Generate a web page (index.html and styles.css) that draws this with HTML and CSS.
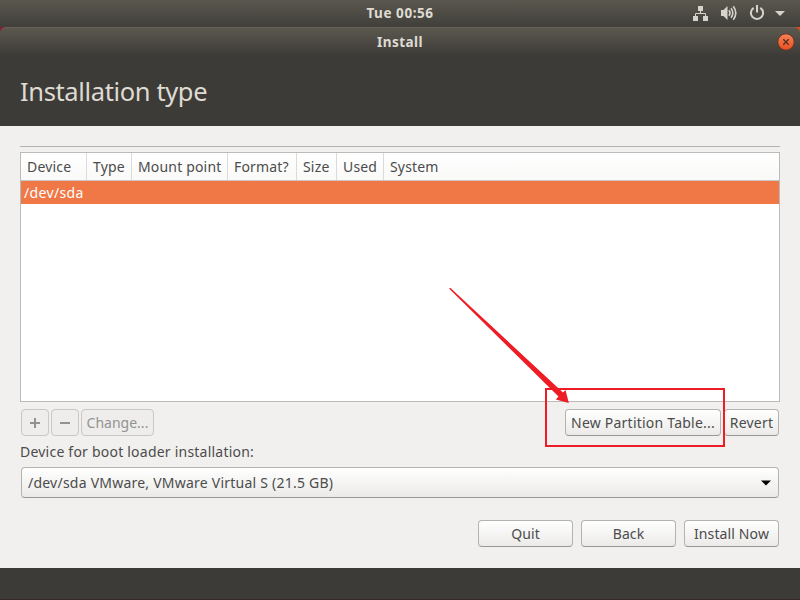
FILE: index.html
```html
<!DOCTYPE html>
<html lang="en">
<head>
<meta charset="utf-8">
<title>Install</title>
<link rel="stylesheet" href="styles.css">
</head>
<body>
<div class="topbar">
  <span class="clock">Tue 00:56</span>
  <svg class="tray" width="100" height="27" viewBox="0 0 100 27">
    <g fill="#d6d3cb">
      <path d="M8 6h5v5H8zM3 16h5v5H3zM13 16h5v5h-5z"/>
      <path d="M31 10h2.500l4-4v14l-4-4H31z"/>
      <path d="M85 11h10l-5 5z"/>
    </g>
    <g fill="none" stroke="#d6d3cb">
      <path d="M10.500 11v2.500M5.500 16v-2.500h10V16"/>
      <path d="M39 10.300q2 2.700 0 5.400M41 8.300q3.600 4.700 0 9.400M43.300 6.300q5 6.700 0 13.400" stroke-width="1.600"/>
      <path d="M63.700 7.800a6.100 6.100 0 1 0 6.600 0M67 5v7.500" stroke-width="2"/>
    </g>
  </svg>
</div>
<div class="window">
  <div class="titlebar">
    <span class="title">Install</span>
    <svg class="close" width="18" height="18" viewBox="0 0 18 18">
      <defs><linearGradient id="cg" x2="0" y2="1"><stop stop-color="#f78259"/><stop offset="1" stop-color="#e9501f"/></linearGradient></defs>
      <circle cx="9" cy="9" r="8.200" fill="url(#cg)" stroke="#6a3422" stroke-width="1"/>
      <path d="M6.300 6.300l5.400 5.400M11.700 6.300l-5.400 5.400" stroke="#51301f" stroke-width="1.300"/>
    </svg>
  </div>
  <header class="header"><h1><span>Installation type</span></h1></header>
  <main class="content">
    <div class="rule"></div>
    <div class="table">
      <div class="thead">
        <span class="c-device">Device</span><span class="c-type">Type</span><span class="c-mount">Mount point</span><span class="c-format">Format?</span><span class="c-size">Size</span><span class="c-used">Used</span><span class="c-system">System</span>
      </div>
      <div class="row"><span>/dev/sda</span></div>
    </div>
    <div class="tools">
      <div class="btn icon off"><svg width="12" height="12" viewBox="0 0 12 12"><path d="M1 6h10M6 1v10" stroke="#929390" stroke-width="2"/></svg></div>
      <div class="btn icon off"><svg width="12" height="12" viewBox="0 0 12 12"><path d="M1 6h10" stroke="#929390" stroke-width="2"/></svg></div>
      <div class="btn change off"><span>Change...</span></div>
      <div class="btn newtable"><span>New Partition Table...</span></div>
      <div class="btn revert"><span>Revert</span></div>
    </div>
    <div class="label"><span>Device for boot loader installation:</span></div>
    <div class="btn combo"><span>/dev/sda VMware, VMware Virtual S (21.5 GB)</span><svg width="10" height="6" viewBox="0 0 10 6"><path d="M0 .5h10L5 5.500z" fill="#000"/></svg></div>
    <div class="actions">
      <div class="btn"><span>Quit</span></div>
      <div class="btn"><span>Back</span></div>
      <div class="btn install"><span>Install Now</span></div>
    </div>
  </main>
</div>
<div class="bottom"></div>
<svg class="marks" width="800" height="600" viewBox="0 0 800 600">
  <rect x="546" y="389" width="178" height="57" fill="none" stroke="#ee1c25" stroke-width="2"/>
  <path d="M449 288.500l1.500-.5L563 392.500l2.500-2.500 3.300 13-13-3.500 2.700-3z" fill="#ee1c25"/>
</svg>
</body>
</html>
```
FILE: styles.css
```css
* { box-sizing: border-box; }
body {
  margin: 0;
  width: 800px;
  height: 600px;
  overflow: hidden;
  background: #3d3b37;
  color: #4c4c4c;
  font: 14px/20px "Noto Sans", "Open Sans", sans-serif;
  white-space: nowrap;
}
.topbar {
  height: 27px;
  display: grid;
  grid-template-columns: 1fr auto 1fr;
  align-items: center;
  background: linear-gradient(#5a574e, #403f3a);
  color: #dfdbd2;
  font-weight: 700;
  font-size: 13.5px;
}
.clock { grid-column: 2; position: relative; top: -1px; letter-spacing: 0.55px; }
.tray { justify-self: end; margin-right: 10px; }
.window {
  height: 541px;
  display: flex;
  flex-direction: column;
  background: linear-gradient(90deg, #8b1a35 50%, #dd4814 50%) top / 100% 5px no-repeat;
}
.titlebar {
  height: 29px;
  flex: none;
  display: grid;
  grid-template-columns: 1fr auto 1fr;
  align-items: center;
  border-top: 1px solid #656157;
  border-radius: 6px 6px 0 0;
  background: linear-gradient(#5b584f, #3d3b37);
  color: #dfdbd2;
  font-weight: 700;
  font-size: 13.5px;
}
.title { grid-column: 2; letter-spacing: 0.45px; }
.close { justify-self: end; margin-right: 5px; }
.header { height: 70px; flex: none; background: #3d3b37; }
h1 {
  margin: 0;
  padding: 17px 20px 0;
  font-size: 25.5px;
  line-height: 36px;
  font-weight: 400;
  letter-spacing: -0.37px;
  color: #dfdbd2;
}
.content { flex: 1; padding: 20px 20px 0; background: #f1f0ee; }
.rule { height: 1px; background: #b5b3ae; }
.table {
  height: 250px;
  margin-top: 5px;
  border: 1px solid #bcbbb7;
  background: #fff;
}
.thead {
  height: 28px;
  display: flex;
  border-bottom: 1px solid #c8c7c4;
  background: linear-gradient(#fff, #f9f9f8);
  letter-spacing: 0.17px;
}
.thead > span { padding: 4px 0 0 6px; border-right: 1px solid #dcdbd9; }
.c-device { width: 66px; }
.c-type { width: 45px; }
.c-mount { width: 96px; }
.c-format { width: 69px; }
.c-size { width: 40px; }
.c-used { width: 47px; }
.thead > .c-system { border: 0; }
.row { height: 23px; padding: 2px 3px; background: #f07746; color: #fff; letter-spacing: 0.35px; }
.tools { display: flex; margin: 7px 1px 0; height: 27px; }
.btn {
  height: 27px;
  display: flex;
  align-items: center;
  justify-content: center;
  border: 1px solid #b5b3b0;
  border-bottom-color: #989794;
  border-radius: 4px;
  background: linear-gradient(#fff, #ebeae8);
}
.off { background: #eeedec; border-color: #c8c7c5; color: #929390; }
.icon { width: 28px; margin-right: 2px; }
.change { width: 73px; }
.newtable { width: 156px; margin: 0 3px 0 auto; letter-spacing: 0.22px; }
.revert { width: 55px; letter-spacing: 0.22px; }
.label { height: 20px; margin-top: 6px; letter-spacing: 0.22px; }
.combo {
  height: 31px;
  margin: 5px 1px 0;
  padding: 0 7px 0 6px;
  justify-content: space-between;
  letter-spacing: 0.23px;
}
.actions { display: flex; justify-content: flex-end; gap: 8px; margin: 22px 1px 0; }
.actions .btn { width: 95px; letter-spacing: 0.12px; }
.bottom { height: 32px; background: linear-gradient(#3d3b37 31px, #38262d 31px); }
.marks { position: absolute; left: 0; top: 0; pointer-events: none; }
```
